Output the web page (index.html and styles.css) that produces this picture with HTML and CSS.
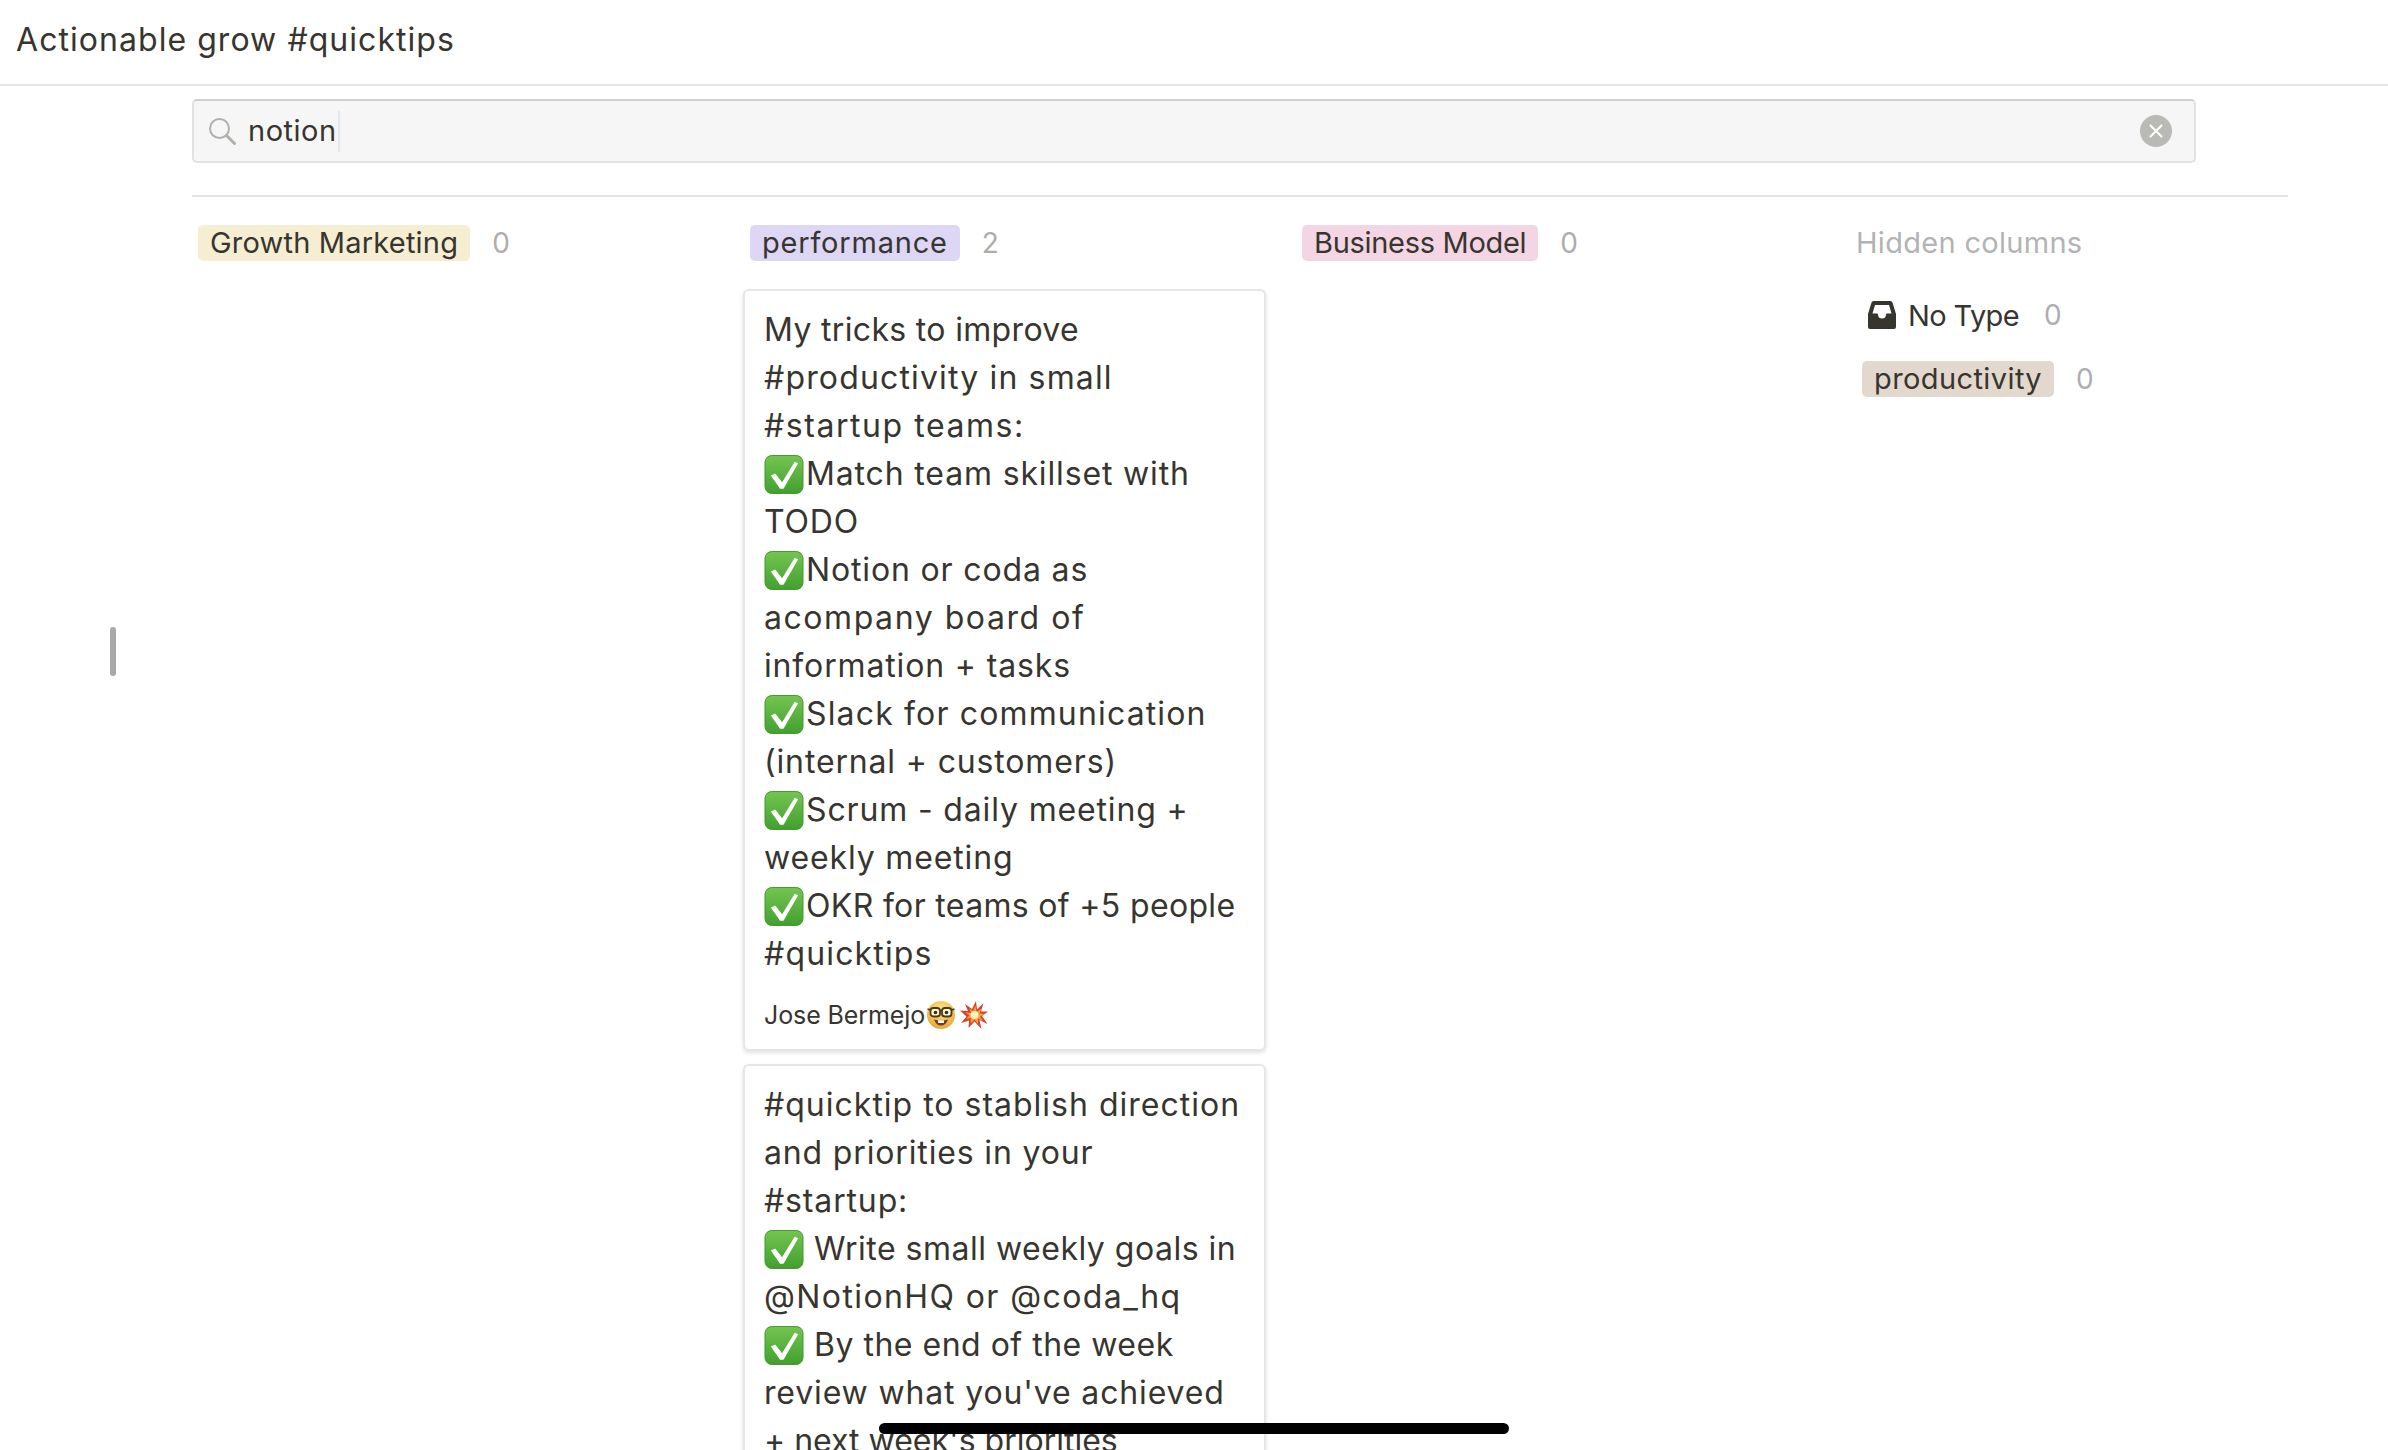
FILE: index.html
```html
<!DOCTYPE html>
<html lang="en">
<head>
<meta charset="utf-8">
<title>Actionable grow #quicktips</title>
<link rel="stylesheet" href="styles.css">
</head>
<body>
<svg width="0" height="0" class="defs" aria-hidden="true">
  <defs>
    <linearGradient id="chk" x1="0" y1="0" x2="0" y2="1"><stop offset="0" stop-color="#74c550"/><stop offset="1" stop-color="#42a02e"/></linearGradient>
    <symbol id="check" viewBox="0 0 40 40">
      <rect x="0.5" y="0.5" width="39" height="39" rx="7" fill="url(#chk)" stroke="#3f9a2c"/>
      <path d="M6.5 21 L11 19 L18 28 L31 7 L34.5 8.5 L19.5 34.5 L16 34.5 Z" fill="#fff"/>
    </symbol>
  </defs>
</svg>
<header class="topbar"><h1 class="title">Actionable grow #quicktips</h1></header>
<main class="content">
  <div class="search">
    <svg class="search-icon" viewBox="0 0 28 28"><circle cx="11.5" cy="11.5" r="9.5" fill="none" stroke="#b0b1ac" stroke-width="2"/><path d="M18.5 18.5 L26.5 26.5" stroke="#b0b1ac" stroke-width="3" stroke-linecap="round"/></svg>
    <span class="query">notion</span><span class="caret"></span>
    <span class="clear"><svg viewBox="0 0 32 32"><path d="M10.5 10.5 L21.5 21.5 M21.5 10.5 L10.5 21.5" stroke="#fff" stroke-width="2" stroke-linecap="round"/></svg></span>
  </div>
  <div class="divider"></div>
  <section class="board">
    <div class="column">
      <div class="col-head"><span class="tag tag-yellow">Growth Marketing</span><span class="count">0</span></div>
    </div>
    <div class="column">
      <div class="col-head"><span class="tag tag-purple">performance</span><span class="count">2</span></div>
      <article class="card">
        <p class="card-text"><span class="ls-tight">My tricks to improve</span><br><span class="ls-wide">#productivity in small</span><br><span class="ls-widest">#startup teams:</span><br><svg class="check"><use href="#check"/></svg>Match team skillset with<br>TODO<br><svg class="check"><use href="#check"/></svg>Notion or coda as<br><span class="ls-widest">acompany board of</span><br>information + tasks<br><svg class="check"><use href="#check"/></svg><span class="ls-wide">Slack for communication</span><br>(internal + customers)<br><svg class="check"><use href="#check"/></svg>Scrum - daily meeting +<br>weekly meeting<br><svg class="check"><use href="#check"/></svg><span class="ls-tight">OKR for teams of +5 people</span><br><span class="ls-wide">#quicktips</span></p>
        <p class="author">Jose Bermejo<svg class="emoji" viewBox="0 0 28 28"><defs><radialGradient id="face" cx=".5" cy=".3" r=".75"><stop offset="0" stop-color="#fde68a"/><stop offset="1" stop-color="#e8a22c"/></radialGradient></defs><circle cx="14" cy="14" r="14" fill="url(#face)"/><rect x="3.5" y="7" width="9.5" height="8.5" rx="3" fill="#fff6d0" stroke="#4a3a1e" stroke-width="1.8"/><rect x="15" y="7" width="9.5" height="8.5" rx="3" fill="#fff6d0" stroke="#4a3a1e" stroke-width="1.8"/><path d="M13 9.5 H15 M3.5 9 L0.5 8 M24.5 9 L27.5 8" stroke="#4a3a1e" stroke-width="1.6"/><circle cx="8.5" cy="11.5" r="1.8" fill="#3a2a1a"/><circle cx="19.5" cy="11.5" r="1.8" fill="#3a2a1a"/><path d="M7 18.5 Q14 20.5 21 18.5 Q19 24.5 14 24.5 Q9 24.5 7 18.5 Z" fill="#6b4020"/><rect x="11" y="19.3" width="6" height="2.6" rx=".6" fill="#fff"/></svg><svg class="emoji boom" viewBox="0 0 28 28"><path d="M16 0 L17 8.5 L23.5 2 L21 10.5 L28 10.5 L22 15 L27.5 23 L19.5 19 L21.5 28 L14.5 20.5 L8.5 27 L9 19.5 L1 22 L6.5 15.5 L0 9.5 L8 10 L5 3 L12 8 Z" fill="#d8412d"/><path d="M15.5 4.5 L16.5 11 L21.5 7.5 L19.5 12.5 L24.5 13 L20 15.5 L23 20 L18 17.5 L18 23 L14.5 18.5 L10.5 22.5 L11 17 L6 18 L9.5 14.5 L5.5 11.5 L11 12 L9.5 7.5 L13 10 Z" fill="#f6a33a"/><circle cx="14.5" cy="14" r="4" fill="#fff3bd"/></svg></p>
      </article>
      <article class="card card-second">
        <p class="card-text"><span class="ls-first">#quicktip to stablish direction</span><br>and priorities in your<br>#startup:<br><svg class="check check-sp"><use href="#check"/></svg><span class="ls-mid">Write small weekly goals in</span><br><span class="ls-wider">@NotionHQ or @coda_hq</span><br><svg class="check check-sp"><use href="#check"/></svg><span class="ls-mid">By the end of the week</span><br>review what you've achieved<br><span class="ls-none">+ next week's priorities</span></p>
      </article>
    </div>
    <div class="column">
      <div class="col-head"><span class="tag tag-pink">Business Model</span><span class="count">0</span></div>
    </div>
    <aside class="column hidden-col">
      <div class="hidden-title">Hidden columns</div>
      <div class="hidden-row no-type">
        <svg class="inbox" viewBox="0 0 28 28"><path fill-rule="evenodd" d="M5.5 0 H22.5 Q24 0 24.5 1.5 L28 13 V26 Q28 28 26 28 H2 Q0 28 0 26 V13 L3.5 1.5 Q4 0 5.5 0 Z M7 4 L4.5 12.5 H9.5 Q10 13 10 14 Q10.5 17.5 14 17.5 Q17.5 17.5 18 14 Q18 13 18.5 12.5 H23.5 L21 4 Z" fill="#37352f"/></svg>
        <span class="no-type-label">No Type</span><span class="count">0</span>
      </div>
      <div class="hidden-row"><span class="tag tag-brown">productivity</span><span class="count">0</span></div>
    </aside>
  </section>
</main>
<div class="handle"></div>
<div class="home-bar"></div>
</body>
</html>
```
FILE: styles.css
```css
* { box-sizing: border-box; }
html, body { margin: 0; height: 1450px; overflow: hidden; background: #fff; }
body { font-family: Inter, "Open Sans", sans-serif; color: #37352f; position: relative; }
.defs { position: absolute; }
.topbar { height: 86px; border-bottom: 2px solid #e4e4e4; padding: 18px 0 0 16px; }
.title { margin: 0; font-size: 32px; font-weight: 400; line-height: 44px; letter-spacing: 1.05px; }
.content { padding: 13px 100px 0 192px; }
.search { height: 64px; width: 2004px; display: flex; align-items: center; padding: 0 22px 0 14px; background: #f6f6f6; border: 2px solid #e2e2e2; border-top-color: #cfcfcf; border-radius: 5px; }
.search-icon { width: 28px; height: 28px; flex: none; }
.query { margin-left: 12px; font-size: 29px; line-height: 40px; letter-spacing: 0.5px; }
.caret { width: 2px; height: 41px; margin-left: 1px; background: #e3e7ee; }
.clear { margin-left: auto; width: 32px; height: 32px; border-radius: 50%; background: #b9bab5; display: block; }
.clear svg { display: block; width: 32px; height: 32px; }
.divider { height: 2px; margin-top: 32px; background: #e4e4e4; }
.board { display: grid; grid-template-columns: repeat(4, 552px); margin-left: -1px; padding-top: 28px; }
.column { min-width: 0; }
.col-head { display: flex; align-items: center; padding-left: 7px; height: 36px; margin-bottom: 28px; }
.tag { display: inline-block; height: 36px; line-height: 36px; padding: 0 12px; border-radius: 5px; font-size: 29px; white-space: nowrap; }
.tag-yellow { background: #f5eed2; letter-spacing: 0.2px; }
.tag-purple { background: #ddd6f4; letter-spacing: 0.8px; }
.tag-pink { background: #f3d5e4; letter-spacing: -0.3px; }
.tag-brown { background: #e3d8ce; letter-spacing: 0.4px; }
.count { margin-left: 22px; font-size: 28px; color: #adadad; line-height: 36px; }
.card { width: 523px; padding: 15px 19px 14px; margin-bottom: 13px; background: #fff; border: 2px solid #e6e6e6; border-radius: 6px; box-shadow: 0 2px 4px rgba(15, 15, 15, .12); }
.card-text { margin: 0; font-size: 32px; line-height: 48px; white-space: nowrap; letter-spacing: 0.85px; }
.ls-none { letter-spacing: 0; }
.ls-tight { letter-spacing: 0.33px; }
.ls-mid { letter-spacing: 0.5px; }
.ls-first { letter-spacing: 1px; }
.ls-wide { letter-spacing: 1.15px; }
.ls-wider { letter-spacing: 1.4px; }
.ls-widest { letter-spacing: 1.55px; }
.check { width: 40px; height: 39px; vertical-align: -9px; margin-right: 2px; }
.check-sp { margin-right: 10px; }
.author { margin: 17px 0 0; font-size: 25px; line-height: 40px; display: flex; align-items: center; white-space: nowrap; letter-spacing: -0.1px; }
.emoji { width: 28px; height: 28px; margin-left: 2px; flex: none; }
.boom { margin-left: 5px; }
.hidden-col { padding-left: 9px; }
.hidden-title { font-size: 29px; line-height: 36px; color: #b3b3b3; height: 36px; margin-bottom: 36px; letter-spacing: 0.3px; }
.hidden-row { display: flex; align-items: center; height: 36px; padding-left: 6px; margin-bottom: 28px; }
.no-type { padding-left: 12px; height: 36px; margin-bottom: 28px; }
.no-type .count { margin-left: 25px; }
.inbox { width: 28px; height: 28px; flex: none; }
.no-type-label { margin-left: 12px; font-size: 29px; letter-spacing: -0.6px; }
.handle { position: absolute; left: 110px; top: 627px; width: 6px; height: 49px; border-radius: 3px; background: #a9a9a9; }
.home-bar { position: absolute; left: 879px; top: 1423px; width: 630px; height: 11px; border-radius: 6px; background: #000; }
```
